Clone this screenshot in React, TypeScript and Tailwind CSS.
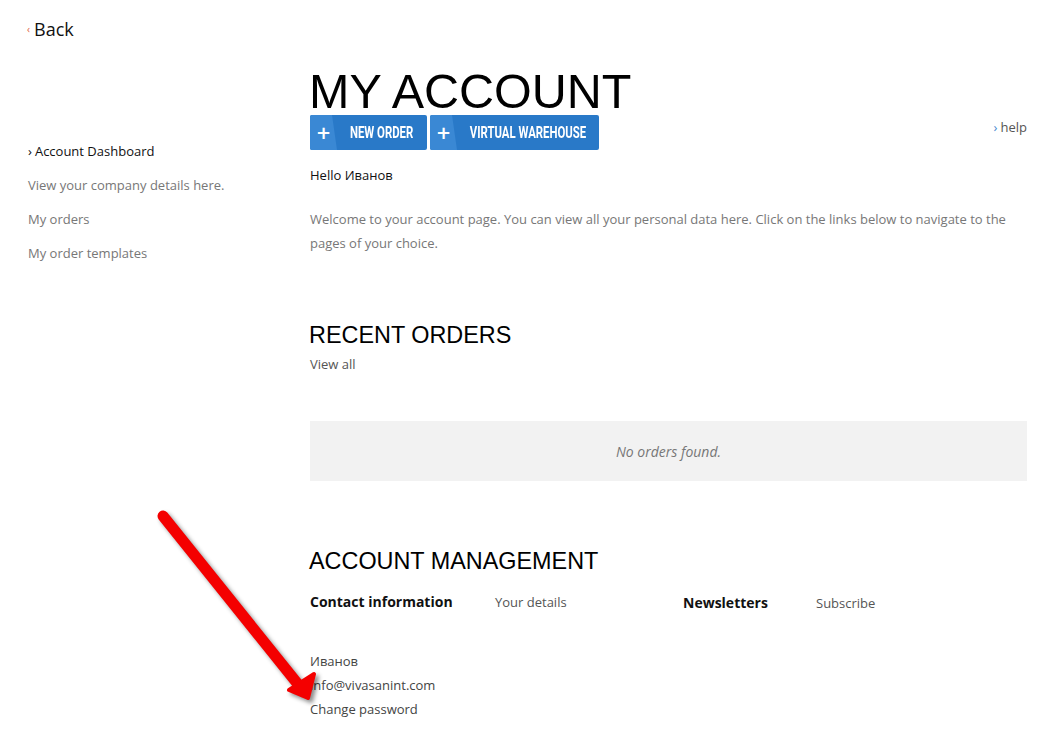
import React from 'react';

const body = "font-['Open_Sans','DejaVu_Sans',sans-serif]";
const head = "font-['Liberation_Sans',Arial,sans-serif]";

function PlusButton({ label, width }: { label: string; width: string }) {
  return (
    <button className={`relative flex h-[35px] ${width} items-center overflow-hidden rounded-[2px] bg-[#2979c8] text-white`}>
      {/* lighter left wedge */}
      <span className="absolute inset-y-0 left-0 w-[27px] bg-[#3a88d4] [clip-path:polygon(0_0,calc(100%-5px)_0,100%_100%,0_100%)]" />
      <span className="relative ml-[6px] w-[28px] shrink-0 text-left text-[18px] font-bold leading-none font-['DejaVu_Sans',sans-serif]">+</span>
      <span className="relative flex min-w-0 flex-1 justify-center pr-[8px]">
        <span className="shrink-0 scale-x-[0.71] whitespace-nowrap text-[16px] font-bold leading-none font-['Roboto',sans-serif]">
          {label}
        </span>
      </span>
    </button>
  );
}

function Arrow() {
  return (
    <svg
      className="pointer-events-none absolute left-0 top-0 [filter:drop-shadow(3px_3px_2px_rgba(0,0,0,0.45))]"
      width="400"
      height="735"
      viewBox="0 0 400 735"
    >
      <line x1="163" y1="516" x2="297" y2="683" stroke="#f40000" strokeWidth="11" strokeLinecap="round" />
      <polygon points="308,698 289,690 314,674" fill="#f40000" stroke="#f40000" strokeWidth="4" strokeLinejoin="round" />
    </svg>
  );
}

export default function App() {
  const sideItems = ['View your company details here.', 'My orders', 'My order templates'];

  return (
    <div className={`relative min-h-[735px] w-full bg-white ${body}`}>
      {/* Back link */}
      <div className="pl-[27px] pt-[17px] leading-6">
        <a className="flex items-center gap-[4px] text-[18px] text-[#111]">
          <span className="text-[10px] text-[#e0603a]">‹</span>
          Back
        </a>
      </div>

      <div className="mt-[26px] flex">
        {/* Sidebar */}
        <aside className="w-[310px] shrink-0 pl-[28px] pt-[67px] text-[13px]">
          <div className="leading-[34px] text-[#111]">
            <span className="mr-[3px]">›</span>Account Dashboard
          </div>
          {sideItems.map((t) => (
            <div key={t} className="leading-[34px] text-[#777]">
              {t}
            </div>
          ))}
        </aside>

        {/* Main */}
        <main className="w-[717px] shrink-0">
          <h1 className={`${head} -ml-[1px] text-[48.5px] leading-[48px] text-black`}>MY ACCOUNT</h1>

          <div className="flex items-start gap-[3px]">
            <PlusButton label="NEW ORDER" width="w-[117px]" />
            <PlusButton label="VIRTUAL WAREHOUSE" width="w-[169px]" />
            <a className="ml-auto text-[13px] leading-6 text-[#555]">
              <span className="mr-[3px] text-[#4a8ad0]">›</span>help
            </a>
          </div>

          <p className="mt-[13px] text-[13px] leading-6 text-[#111]">Hello Иванов</p>

          <p className="mt-[20px] text-[13px] leading-6 text-[#777]">
            Welcome to your account page. You can view all your personal data here. Click on the links below to navigate to the pages of your choice.
          </p>

          <h2 className={`${head} -ml-[1px] mt-[65px] text-[23.4px] leading-[30px] text-black`}>RECENT ORDERS</h2>
          <a className="mt-[2px] block text-[13px] leading-6 text-[#555]">View all</a>

          <div className="mt-[45px] flex h-[60px] items-center justify-center bg-[#f2f2f2]">
            <span className="text-[14px] italic text-[#777]">No orders found.</span>
          </div>

          <h2 className={`${head} -ml-[1px] mt-[65px] text-[23.4px] leading-[30px] text-black`}>ACCOUNT MANAGEMENT</h2>

          <div className="mt-[14px] flex text-[13px] leading-6">
            <div className="flex w-[373px]">
              <span className="w-[185px] text-[14px] font-bold text-[#111]">Contact information</span>
              <span className="text-[#555]">Your details</span>
            </div>
            <div className="flex pt-[1px]">
              <span className="w-[133px] text-[14px] font-bold text-[#111]">Newsletters</span>
              <span className="text-[#555]">Subscribe</span>
            </div>
          </div>

          <div className="mt-[34px] text-[13px] leading-6 text-[#444]">
            <div>Иванов</div>
            <div>info@vivasanint.com</div>
            <div>Change password</div>
          </div>
        </main>
      </div>

      <Arrow />
    </div>
  );
}
